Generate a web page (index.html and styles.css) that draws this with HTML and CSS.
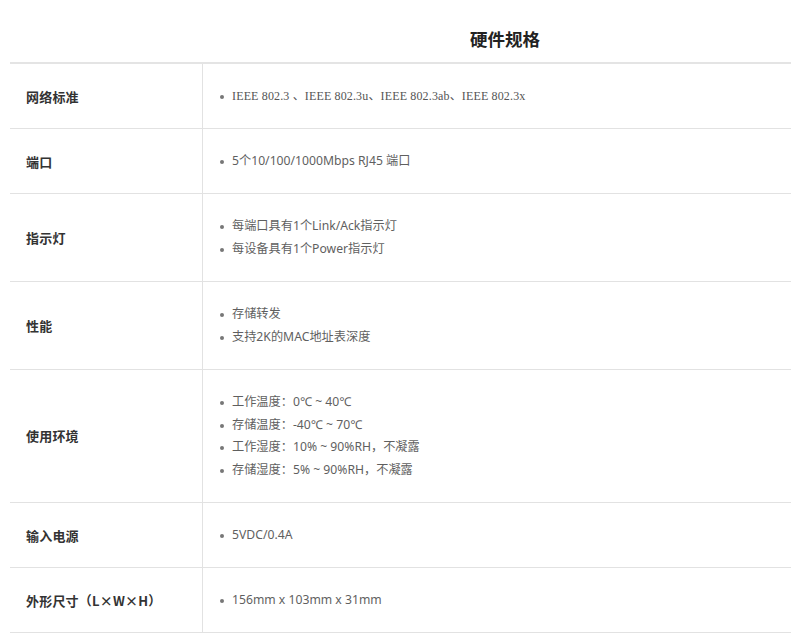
FILE: index.html
```html
<!DOCTYPE html>
<html lang="zh">
<head>
<meta charset="utf-8">
<title>硬件规格</title>
<link rel="stylesheet" href="styles.css">
</head>
<body>
<div class="spec">
  <h2 class="title"><span>硬件规格</span></h2>
  <div class="table">
    <div class="row">
      <div class="label">网络标准</div>
      <ul class="vals"><li class="serif">IEEE 802.3 、IEEE 802.3u、IEEE 802.3ab、IEEE 802.3x</li></ul>
    </div>
    <div class="row">
      <div class="label">端口</div>
      <ul class="vals"><li>5个10/100/1000Mbps RJ45 端口</li></ul>
    </div>
    <div class="row">
      <div class="label">指示灯</div>
      <ul class="vals"><li>每端口具有1个Link/Ack指示灯</li><li>每设备具有1个Power指示灯</li></ul>
    </div>
    <div class="row">
      <div class="label">性能</div>
      <ul class="vals"><li>存储转发</li><li>支持2K的MAC地址表深度</li></ul>
    </div>
    <div class="row">
      <div class="label">使用环境</div>
      <ul class="vals">
        <li>工作温度<span class="p">：</span>0℃ ~ 40℃</li>
        <li>存储温度<span class="p">：</span>-40℃ ~ 70℃</li>
        <li>工作湿度<span class="p">：</span>10% ~ 90%RH<span class="p">，</span>不凝露</li>
        <li>存储湿度<span class="p">：</span>5% ~ 90%RH<span class="p">，</span>不凝露</li>
      </ul>
    </div>
    <div class="row">
      <div class="label">输入电源</div>
      <ul class="vals"><li>5VDC/0.4A</li></ul>
    </div>
    <div class="row">
      <div class="label">外形尺寸<span class="p">（</span>L×W×H<span class="p">）</span></div>
      <ul class="vals"><li>156mm x 103mm x 31mm</li></ul>
    </div>
  </div>
</div>
</body>
</html>
```
FILE: styles.css
```css
html, body {
  margin: 0;
  padding: 0;
  background: #ffffff;
}
body {
  font-family: "Noto Sans", "Noto Sans CJK SC", sans-serif;
  color: #333;
}
.spec {
  margin-left: 10px;
  width: 781px;
}
.title {
  margin: 0;
  height: 63px;
  box-sizing: border-box;
  padding: 29px 0 0 203px;
  display: flex;
  justify-content: center;
  font-family: "Noto Sans CJK SC", sans-serif;
  font-size: 17.5px;
  line-height: 20px;
  font-weight: 700;
  color: #222;
}
.title span {
  margin-left: 6px;
}
.table {
  border-top: 2px solid #e4e4e4;
  margin-top: -1px;
}
.row {
  display: grid;
  grid-template-columns: 193px 1fr;
  border-bottom: 1px solid #e2e2e2;
}
.label {
  display: flex;
  align-items: center;
  padding-left: 16px;
  border-right: 1px solid #e2e2e2;
  font-family: "Noto Sans CJK SC", sans-serif;
  font-size: 13px;
  font-weight: 700;
  color: #333;
  letter-spacing: 0.2px;
}
.p {
  font-family: "Noto Sans CJK TC", sans-serif;
  line-height: 0;
}
.vals {
  list-style: none;
  margin: 0;
  padding: 21px 0 20.6px 29px;
  font-size: 12.2px;
  line-height: 22.6px;
  color: #5f5f5f;
}
.vals li {
  position: relative;
}
.vals li::before {
  content: "";
  position: absolute;
  left: -12px;
  top: 10px;
  width: 4px;
  height: 4px;
  border-radius: 50%;
  background: #777;
}
.vals li.serif {
  font-family: "Liberation Serif", "Noto Sans CJK SC", serif;
  font-size: 12px;
  letter-spacing: 0.15px;
  color: #555;
}
```
